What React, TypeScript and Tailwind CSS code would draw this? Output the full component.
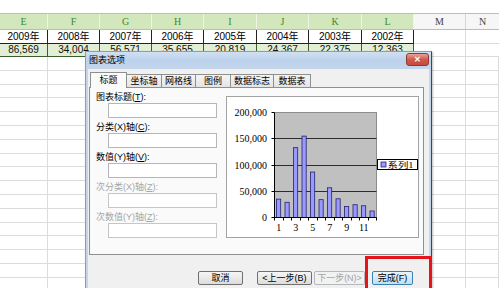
import React from "react";

const letters = ["E", "F", "G", "H", "I", "J", "K", "L"];
const years = ["2009年", "2008年", "2007年", "2006年", "2005年", "2004年", "2003年", "2002年"];
const values = ["86,569", "34,004", "56,571", "35,655", "20,819", "24,367", "22,375", "12,363"];
const bars = [35000, 29000, 133000, 155000, 86569, 34004, 56571, 35655, 20819, 24367, 22375, 12363];

const gridCols = "grid grid-cols-[48px_52px_52px_52px_53px_52px_53px_52px_52px_1fr]";

const tabs = [
  { t: "标题", w: "w-[37px]", sel: true },
  { t: "坐标轴", w: "w-[35px]" },
  { t: "网格线", w: "w-[34px]" },
  { t: "图例", w: "w-[35px]" },
  { t: "数据标志", w: "w-[43px]" },
  { t: "数据表", w: "w-[37px]" },
];

const fields = [
  { pre: "图表标题(", key: "T", post: "):", off: false },
  { pre: "分类(X)轴(", key: "C", post: "):", off: false },
  { pre: "数值(Y)轴(", key: "V", post: "):", off: false },
  { pre: "次分类(X)轴(", key: "Z", post: "):", off: true },
  { pre: "次数值(Y)轴(", key: "Z", post: "):", off: true },
];

function Chart() {
  const px = 47.5;
  const py = 15.5;
  const pw = 102;
  const ph = 105;
  const cw = pw / 12;
  const yOf = (v: number) => py + ph - (v / 200000) * ph;
  const crisp = (n: number) => Math.round(n - 0.5) + 0.5;

  return (
    <svg width="193" height="142" className="block">
      <rect x={px} y={py} width={pw} height={ph} fill="#c0c0c0" stroke="#8c8c8c" />
      {[50000, 100000, 150000].map((v) => (
        <line key={v} x1={px} x2={px + pw} y1={crisp(yOf(v))} y2={crisp(yOf(v))} stroke="#2b2b2b" />
      ))}
      {bars.map((v, i) => (
        <rect
          key={i}
          x={px + i * cw + 2}
          y={yOf(v)}
          width={4.2}
          height={py + ph - yOf(v)}
          fill="#9999ff"
          stroke="#22226e"
          strokeWidth="0.8"
        />
      ))}
      {/* axes */}
      <line x1={px} x2={px} y1={py} y2={py + ph} stroke="#000" />
      <line x1={px} x2={px + pw} y1={py + ph} y2={py + ph} stroke="#000" />
      {[0, 50000, 100000, 150000, 200000].map((v) => (
        <line key={v} x1={px - 3} x2={px} y1={crisp(yOf(v))} y2={crisp(yOf(v))} stroke="#000" />
      ))}
      {Array.from({ length: 13 }).map((_, i) => (
        <line key={i} x1={crisp(px + i * cw)} x2={crisp(px + i * cw)} y1={py + ph} y2={py + ph + 3} stroke="#000" />
      ))}
      {/* y labels */}
      {[
        ["200,000", 200000],
        ["150,000", 150000],
        ["100,000", 100000],
        ["50,000", 50000],
        ["0", 0],
      ].map(([t, v]) => (
        <text
          key={t as string}
          x={40}
          y={yOf(v as number) + 3.5}
          textAnchor="end"
          fontSize="10"
          fontFamily="'Liberation Serif', serif"
          fill="#000"
        >
          {t}
        </text>
      ))}
      {/* x labels */}
      {[1, 3, 5, 7, 9, 11].map((n) => (
        <text
          key={n}
          x={px + (n - 0.5) * cw}
          y={134}
          textAnchor="middle"
          fontSize="10"
          fontFamily="'Liberation Serif', serif"
          fill="#000"
        >
          {n}
        </text>
      ))}
      {/* legend */}
      <rect x={150.5} y={62.5} width={40} height={10} fill="#fff" stroke="#000" />
      <rect x={154} y={65} width={5} height={5} fill="#9999ff" stroke="#22226e" strokeWidth="0.8" />
      <text
        x={160.5}
        y={71}
        fontSize="8.5"
        textLength={26}
        lengthAdjust="spacingAndGlyphs"
        fontFamily="'Liberation Serif', 'Noto Sans CJK SC', serif"
        fill="#000"
      >
        系列1
      </text>
    </svg>
  );
}

export default function App() {
  return (
    <div className="relative w-[499px] h-[288px] overflow-hidden bg-white font-['Liberation_Sans','Noto_Sans_CJK_SC',sans-serif]">
      {/* spreadsheet */}
      <div className="h-[13px] bg-white" />
      <div className={`${gridCols} h-[17px] border-y border-[#b3c6a0]`}>
        {letters.map((l) => (
          <div
            key={l}
            className="flex items-center justify-center border-r border-[#eef5e5] bg-[#d3e7bd] text-[10px] text-[#3a8a2e] font-['Liberation_Serif',serif]"
          >
            {l}
          </div>
        ))}
        <div className="flex items-center justify-center border-r border-[#d6d6d6] bg-[#f6f6f6] text-[10px] text-[#444] font-['Liberation_Serif',serif]">
          M
        </div>
        <div className="flex items-center justify-center bg-[#f6f6f6] text-[10px] text-[#444] font-['Liberation_Serif',serif]">
          N
        </div>
      </div>
      <div className={`${gridCols} h-[14px]`}>
        {years.map((y) => (
          <div key={y} className="flex items-center justify-center border-r border-b border-[#222] text-[10px] leading-none text-black">
            {y}
          </div>
        ))}
        <div className="border-r border-b border-[#dcdcdc]" />
        <div className="border-b border-[#dcdcdc]" />
      </div>
      <div className={`${gridCols} h-[13px]`}>
        {values.map((v) => (
          <div key={v} className="flex items-center justify-center border-r border-b border-[#3b5e2c] bg-[#e2efd6] text-[10px] leading-none text-[#111]">
            {v}
          </div>
        ))}
        <div className="border-r border-b border-[#dcdcdc]" />
        <div className="border-b border-[#dcdcdc]" />
      </div>
      {Array.from({ length: 17 }).map((_, r) => (
        <div key={r} className={`${gridCols} h-[13.8px]`}>
          {Array.from({ length: 10 }).map((_, c) => (
            <div key={c} className="border-r border-b border-[#dcdcdc]" />
          ))}
        </div>
      ))}

      {/* dialog */}
      <div className="absolute left-[85px] top-[51px] w-[347px] h-[250px] border border-[#8a9db3] border-r-[#24506f] bg-[#c4d6ec] shadow-[1px_1px_2px_rgba(0,0,0,0.25)]">
        <div className="flex h-[17px] items-start justify-between bg-gradient-to-b from-[#d0e0f3] via-[#bcd1eb] to-[#c4d6ec] pl-[3px] pr-[2px] pt-[1px]">
          <span className="text-[9px] leading-[15px] text-black">图表选项</span>
          <div className="flex h-[13px] w-[23px] items-center justify-center rounded-[3px] border border-[#8c3b31] bg-gradient-to-b from-[#e8a396] via-[#cf5a4b] to-[#c84b3c] text-[8px] font-bold leading-none text-white">
            ✕
          </div>
        </div>
        <div className="mx-[2px] h-full bg-[#f0f0f0] pt-[3px]">
          {/* tabs */}
          <div className="relative z-10 flex h-[16px] items-end pl-[2px] -mb-px">
            {tabs.map((t) =>
              t.sel ? (
                <div
                  key={t.t}
                  className={`${t.w} flex h-[16px] items-start justify-center border border-b-0 border-[#8e8f8f] bg-[#fafafa] pt-[1px] text-[9px] leading-[12px] text-black`}
                >
                  {t.t}
                </div>
              ) : (
                <div
                  key={t.t}
                  className={`${t.w} flex h-[14px] items-center justify-center border border-l-0 border-[#8e8f8f] bg-gradient-to-b from-[#f4f4f4] to-[#e4e4e4] text-[9px] leading-none text-black`}
                >
                  {t.t}
                </div>
              )
            )}
          </div>
          {/* panel */}
          <div className="ml-px flex h-[168px] w-[335px] border border-[#8e8f8f] bg-[#fafafa] pl-[6px] pt-[3px]">
            <div className="w-[130px]">
              {fields.map((f, i) => (
                <div key={i} className="mb-[3px]">
                  <div className={`h-[12px] text-[9px] leading-[12px] ${f.off ? "text-[#a6a6a6]" : "text-black"}`}>
                    {f.pre}
                    <span className="underline">{f.key}</span>
                    {f.post}
                  </div>
                  <div className={`ml-[12px] h-[15px] w-[109px] border bg-white ${f.off ? "border-[#c4c6ca]" : "border-[#b4b6bb]"}`} />
                </div>
              ))}
            </div>
            <div className="mt-[5px] h-[142px] w-[193px] border border-[#a3a3a3] bg-white">
              <Chart />
            </div>
          </div>
          {/* buttons */}
          <div className="mt-[16px] flex pl-[110px]">
            <div className="flex h-[14px] w-[45px] items-center justify-center rounded-[2px] border border-[#707070] bg-gradient-to-b from-[#f6f6f6] to-[#dcdcdc] text-[9px] leading-none text-black">
              取消
            </div>
            <div className="ml-[14px] flex h-[14px] w-[55px] items-center justify-center rounded-[2px] border border-[#707070] bg-gradient-to-b from-[#f6f6f6] to-[#dcdcdc] text-[9px] leading-none text-black">
              &lt;上一步(B)
            </div>
            <div className="ml-[2px] flex h-[14px] w-[51px] items-center justify-center rounded-[2px] border border-[#b5b8bb] bg-[#f2f2f2] text-[9px] leading-none text-[#a3a3a3]">
              下一步(N)&gt;
            </div>
            <div className="ml-[7px] flex h-[14px] w-[41px] items-center justify-center rounded-[2px] border border-[#3c7fb1] bg-gradient-to-b from-[#eaf5fd] to-[#bfdff5] text-[9px] leading-none text-black">
              完成(F)
            </div>
          </div>
        </div>
      </div>

      {/* red highlight */}
      <div className="absolute left-[365px] top-[256px] h-[40px] w-[67px] border-[3px] border-[#e5141b]" />
    </div>
  );
}
